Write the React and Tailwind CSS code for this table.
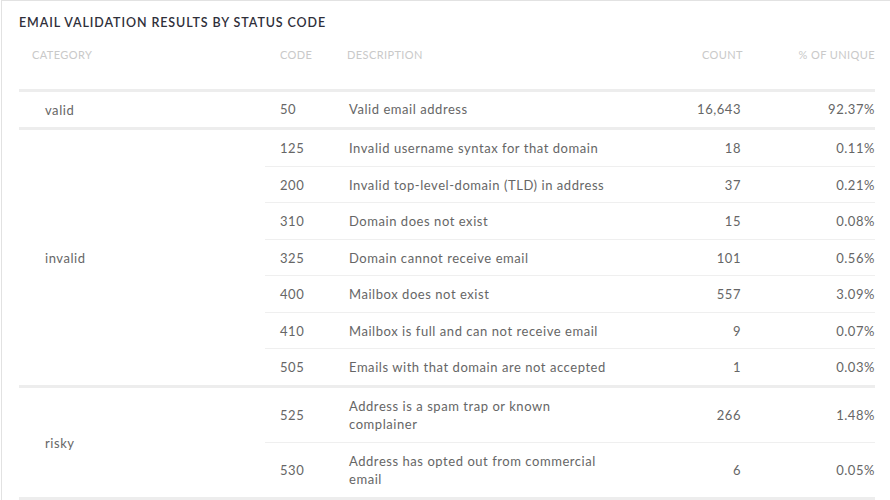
import React from 'react'

const groups = [
  {
    category: 'valid',
    rows: [{ code: 50, desc: 'Valid email address', count: '16,643', pct: '92.37%' }],
  },
  {
    category: 'invalid',
    rows: [
      { code: 125, desc: 'Invalid username syntax for that domain', count: '18', pct: '0.11%' },
      { code: 200, desc: 'Invalid top-level-domain (TLD) in address', count: '37', pct: '0.21%' },
      { code: 310, desc: 'Domain does not exist', count: '15', pct: '0.08%' },
      { code: 325, desc: 'Domain cannot receive email', count: '101', pct: '0.56%' },
      { code: 400, desc: 'Mailbox does not exist', count: '557', pct: '3.09%' },
      { code: 410, desc: 'Mailbox is full and can not receive email', count: '9', pct: '0.07%' },
      { code: 505, desc: 'Emails with that domain are not accepted', count: '1', pct: '0.03%' },
    ],
  },
  {
    category: 'risky',
    rows: [
      { code: 525, desc: 'Address is a spam trap or known complainer', count: '266', pct: '1.48%' },
      { code: 530, desc: 'Address has opted out from commercial email', count: '6', pct: '0.05%' },
    ],
  },
]

// row padding per group, alternating a pixel in "invalid" so the rows land on the reference grid
const padFor = (cat, i) => {
  if (cat === 'valid') return 'pt-[8px] pb-[9px]'
  if (cat === 'risky') return 'py-[9px]'
  return i % 2 ? 'pt-[9px] pb-[8px]' : 'py-[9px]'
}

export default function App() {
  return (
    <div className="w-[890px] h-[500px] overflow-hidden bg-white" style={{ fontFamily: 'Lato, "Open Sans", sans-serif' }}>
      <div className="ml-px border-l border-t border-[#e2e2e2] pl-[17px] pr-[15px] pt-[14px] h-[520px]">
        <h2 className="text-[12.5px] leading-4 font-semibold tracking-[0.9px] text-[#2f2f3a]">
          EMAIL VALIDATION RESULTS BY STATUS CODE
        </h2>
        <table className="w-[856px] border-collapse table-fixed text-[13px] text-[#666] tracking-[0.55px]">
          <colgroup>
            <col className="w-[246px]" />
            <col className="w-[69px]" />
            <col className="w-[282px]" />
            <col className="w-[140px]" />
            <col className="w-[119px]" />
          </colgroup>
          <thead>
            <tr className="text-[11px] leading-[14px] text-[#c9c9c9] font-normal tracking-[0.4px]">
              <th className="pt-[17px] pb-[27px] pl-[13px] text-left font-normal">CATEGORY</th>
              <th className="pt-[17px] pb-[27px] pl-[15px] text-left font-normal">CODE</th>
              <th className="pt-[17px] pb-[27px] pl-[13px] text-left font-normal">DESCRIPTION</th>
              <th className="pt-[17px] pb-[27px] pr-[13px] text-right font-normal">COUNT</th>
              <th className="pt-[17px] pb-[27px] text-right font-normal">% OF UNIQUE</th>
            </tr>
          </thead>
          {groups.map((g) => (
            <tbody key={g.category}>
              {g.rows.map((r, i) => {
                const pad = padFor(g.category, i)
                const top = i === 0 ? 'border-t-[3px] border-[#ededed]' : 'border-t border-[#efefef]'
                return (
                  <tr key={r.code} className="leading-[18px]">
                    {i === 0 && (
                      <td rowSpan={g.rows.length} className="border-t-[3px] border-[#ededed] pl-[26px] align-middle">
                        {g.category}
                      </td>
                    )}
                    <td className={`${top} ${pad} pl-[15px]`}>{r.code}</td>
                    <td className={`${top} ${pad} pl-[15px] pr-[10px]`}>{r.desc}</td>
                    <td className={`${top} ${pad} pr-[15px] text-right`}>{r.count}</td>
                    <td className={`${top} ${pad} text-right`}>{r.pct}</td>
                  </tr>
                )
              })}
            </tbody>
          ))}
          <tbody>
            <tr>
              <td colSpan={5} className="border-t-[3px] border-[#ededed] h-4"></td>
            </tr>
          </tbody>
        </table>
      </div>
    </div>
  )
}
